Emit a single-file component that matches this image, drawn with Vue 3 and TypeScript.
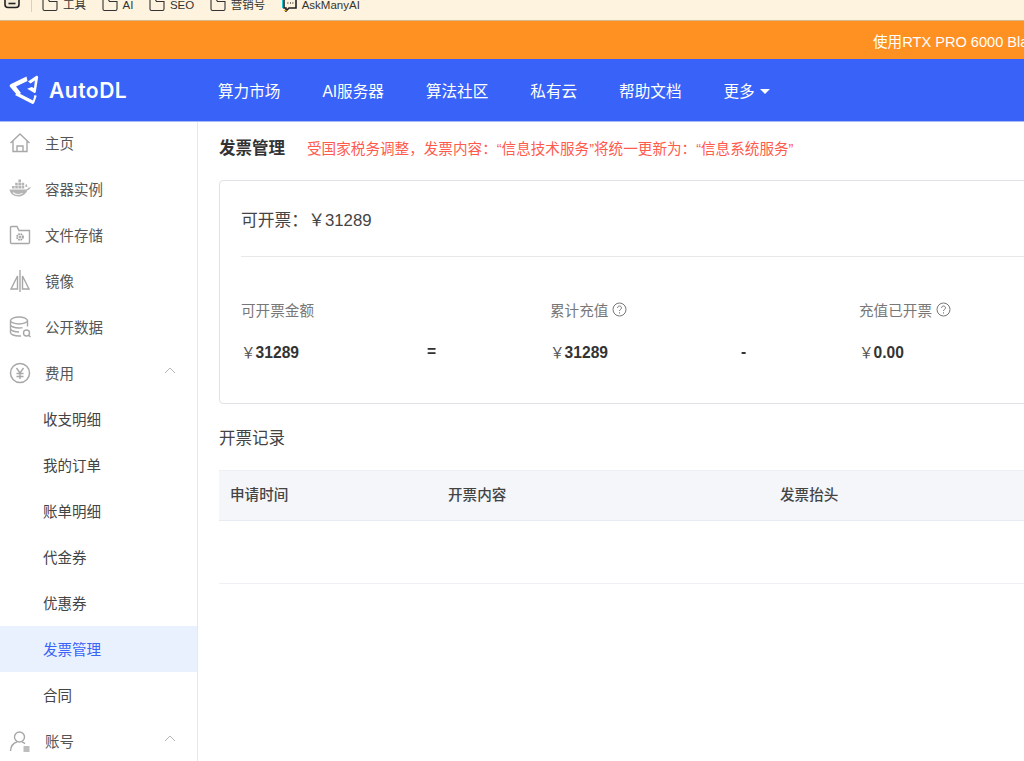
<template>
  <div class="page">
    <div class="bookmarks">
      <svg class="printer" width="16" height="12" viewBox="0 0 16 12" fill="none" stroke="#222" stroke-width="1.6">
        <rect x="1" y="-3" width="14" height="10.500" rx="3" fill="#f4ead8" />
        <path d="M4.500 3.500h7" />
      </svg>
      <span class="bm-sep"></span>
      <span v-for="b in bookmarks" :key="b" class="bm">
        <svg width="16" height="12" viewBox="0 0 16 12" fill="none" stroke="#333" stroke-width="1.100">
          <path d="M1 -2v11a1.500 1.500 0 0 0 1.500 1.500h11A1.500 1.500 0 0 0 15 9V1.500H7.500L6 -1" />
        </svg>
        <span>{{ b }}</span>
      </span>
      <span class="bm">
        <svg width="16" height="12" viewBox="0 0 16 12">
          <path d="M3 -2h12v10H8l-3 3V8H3z" fill="none" stroke="#222" stroke-width="1.600" />
          <path d="M6.500 3h.8M9 3h.8M11.500 3h.8" stroke="#222" stroke-width="1.400" />
          <path d="M1.500 0v8" stroke="#19c8d8" stroke-width="1" />
          <path d="M3 10.500h2.500" stroke="#f0a020" stroke-width="1.200" />
        </svg>
        <span>AskManyAI</span>
      </span>
    </div>

    <div class="notice">
      <span>使用RTX PRO 6000 Blackwell</span>
    </div>

    <header class="nav">
      <div class="logo">
        <svg width="32" height="32" viewBox="0 0 32 32" fill="#fff">
          <path d="M18.500 2.500 3 10c-1.500.8-1.700 2-.8 3l7.300 8.500 3.500-2.500-5-6.500 11.500-5.500z" />
          <path d="M20 7.500 28 2c1.300-.8 2.300 0 2.100 1.400L27.800 18c-.2 1-1 1.200-1.800.8l-6.800-4 4.500-1.800 2.300.9.900-7.300-4.300 3z" />
          <path d="M9.500 18.500 25 26.500l1.500-5.500 2.200.8-2.400 7c-.4 1.100-1.400 1.400-2.300.9L7 21z" />
        </svg>
        <span class="logo-text">AutoDL</span>
      </div>
      <nav class="nav-links">
        <span v-for="n in navLinks" :key="n">{{ n }}</span>
        <span class="more">更多<i class="caret"></i></span>
      </nav>
    </header>

    <div class="body">
      <aside class="sidebar">
        <div
          v-for="item in menu"
          :key="item.label"
          :class="['menu-item', { sub: !item.icon, active: item.active }]"
        >
          <span v-if="item.icon" class="menu-icon">
            <svg width="22" height="22" viewBox="0 0 22 22" fill="none" stroke="#a8a8a8" stroke-width="1.400">
              <template v-if="item.icon === 'home'">
                <path d="M1.500 11 11 2l9.500 9M4 9v10.500h14V9" />
                <path d="M8 19.500V14h6v5.500" />
              </template>
              <template v-else-if="item.icon === 'docker'">
                <path d="M.5 11.500H17c1 0 2-.8 2.500-2 1 .2 2 0 2.500-.5-1 2.500-3 3-3.500 3-1.500 4-5 6.500-9 6.500-5 0-8.500-3-9-7z" fill="#b5b5b5" stroke="none" />
                <path d="M3 8h2.600v2.600H3zM6.200 8h2.600v2.600H6.200zM9.400 8H12v2.600H9.400zM12.600 8h2.600v2.600h-2.600zM6.200 4.800h2.600v2.600H6.200zM9.400 4.800H12v2.600H9.400zM12.600 4.800h2.600v2.600h-2.600zM9.400 1.600H12v2.600H9.400z" fill="#b5b5b5" stroke="none" />
                <path d="M16.500 9c-.3-1.200 0-2.300.7-3 .8.600 1.200 1.800 1 3z" fill="#b5b5b5" stroke="none" />
                <path d="M4 14.500c2.500 2.200 6.500 2.400 9.500.6" stroke="#f4f4f4" stroke-width="1.100" />
              </template>
              <template v-else-if="item.icon === 'folder'">
                <path d="M1.500 3.500v15a1 1 0 0 0 1 1h17a1 1 0 0 0 1-1V6.500H10L8 2.500H2.500a1 1 0 0 0-1 1z" />
                <circle cx="11" cy="13" r="3" stroke="#999" stroke-dasharray="1.600 .8" stroke-width="1.600" />
                <circle cx="11" cy="13" r="1" stroke="#999" stroke-width="1" />
              </template>
              <template v-else-if="item.icon === 'mirror'">
                <path d="M11 0v22" />
                <path d="M8.500 6v13H2zM13.500 6v13h6.500z" />
              </template>
              <template v-else-if="item.icon === 'data'">
                <ellipse cx="10" cy="4.500" rx="8.500" ry="3.500" />
                <path d="M1.500 4.500v12c0 2 4 3.500 8.500 3.500h2M18.500 4.500v6M1.500 8.500c0 2 4 3.500 8.500 3.500 1.500 0 2.500 0 3.500-.3M1.500 12.500c0 2 4 3.500 8.500 3.500" />
                <circle cx="17.500" cy="17" r="3" />
                <path d="m19.500 19 2 2" />
              </template>
              <template v-else-if="item.icon === 'yen'">
                <circle cx="11" cy="11" r="9.500" stroke-width="1.500" />
                <path d="m7.500 6 3.500 5 3.500-5M7.500 11.500h7M7.500 14.500h7M11 11v6" />
              </template>
              <template v-else>
                <circle cx="10.500" cy="7" r="5" />
                <path d="M1.500 21c.3-5 3-8 6.500-9M13 12c1 .3 2 .8 3 1.600" />
                <path d="M14.500 17h6M14.500 19h6M14.500 21h6" />
              </template>
            </svg>
          </span>
          <span class="menu-label">{{ item.label }}</span>
          <svg v-if="item.arrow" class="menu-arrow" width="12" height="7" viewBox="0 0 12 7" fill="none" stroke="#b5b5b5" stroke-width="1">
            <path d="m1 6 5-5 5 5" />
          </svg>
        </div>
      </aside>

      <main class="content">
        <div class="title-row">
          <h1>发票管理</h1>
          <span class="tip">受国家税务调整，发票内容：“信息技术服务”将统一更新为：“信息系统服务”</span>
        </div>

        <section class="card">
          <div class="available">可开票：￥31289</div>
          <div class="stats">
            <div v-for="s in stats" :key="s.label" class="stat">
              <div class="stat-label">
                {{ s.label }}
                <svg v-if="s.help" width="15" height="15" viewBox="0 0 15 15" fill="none" stroke="#777" stroke-width="1">
                  <circle cx="7.500" cy="7.500" r="6.500" />
                  <path d="M5.500 6c0-1.200 1-2 2-2s2 .8 2 1.900c0 1.500-2 1.500-2 3.100" />
                  <path d="M7.500 10.300v1.200" />
                </svg>
              </div>
              <div class="stat-value">
                <span class="yen">￥</span><b>{{ s.value }}</b>
                <b v-if="s.op" class="op" :style="{ left: s.opLeft + 'px' }">{{ s.op }}</b>
              </div>
            </div>
          </div>
        </section>

        <h2>开票记录</h2>

        <div class="thead">
          <span class="col-time">申请时间</span>
          <span class="col-content">开票内容</span>
          <span>发票抬头</span>
        </div>
        <div class="tbody"></div>
      </main>
    </div>
  </div>
</template>

<script setup lang="ts">
interface MenuItem {
  label: string
  icon?: string
  arrow?: boolean
  active?: boolean
}

interface Stat {
  label: string
  value: string
  help?: boolean
  op?: string
  opLeft?: number
}

const bookmarks = ['工具', 'AI', 'SEO', '营销号']
const navLinks = ['算力市场', 'AI服务器', '算法社区', '私有云', '帮助文档']

const menu: MenuItem[] = [
  { label: '主页', icon: 'home' },
  { label: '容器实例', icon: 'docker' },
  { label: '文件存储', icon: 'folder' },
  { label: '镜像', icon: 'mirror' },
  { label: '公开数据', icon: 'data' },
  { label: '费用', icon: 'yen', arrow: true },
  { label: '收支明细' },
  { label: '我的订单' },
  { label: '账单明细' },
  { label: '代金券' },
  { label: '优惠券' },
  { label: '发票管理', active: true },
  { label: '合同' },
  { label: '账号', icon: 'user', arrow: true }
]

const stats: Stat[] = [
  { label: '可开票金额', value: '31289', op: '=', opLeft: 186 },
  { label: '累计充值', value: '31289', help: true, op: '-', opLeft: 191 },
  { label: '充值已开票', value: '0.00', help: true }
]
</script>

<style>
html,
body {
  margin: 0;
  overflow: hidden;
  background: #fff;
}
</style>

<style scoped>
.page {
  width: 1024px;
  height: 761px;
  overflow: hidden;
  font-family: "Liberation Sans", "Noto Sans CJK SC", sans-serif;
  color: #333;
}

.bookmarks {
  display: flex;
  align-items: flex-start;
  height: 20px;
  padding-left: 4px;
  background: #fef3de;
  border-bottom: 1px solid #d8b98c;
  font-size: 11.5px;
  color: #333;
  overflow: hidden;
}

.bm-sep {
  width: 1px;
  height: 12px;
  margin: 0 10px 0 11px;
  background: #d8d0c0;
}

.bm {
  display: flex;
  align-items: flex-start;
  gap: 5px;
  margin-right: 15.5px;
  line-height: 11px;
}

.notice {
  display: flex;
  align-items: center;
  height: 38px;
  background: #ff9123;
  color: #fff;
  font-size: 14.6px;
  white-space: nowrap;
  padding-left: 873px;
  overflow: hidden;
}

.nav {
  position: relative;
  z-index: 1;
  display: flex;
  align-items: center;
  height: 62px;
  background: #3963f8;
  color: #fff;
  border-bottom: 1px solid #a5bcf8;
}

.logo {
  display: flex;
  align-items: center;
  gap: 9px;
  width: 218px;
  padding-left: 8px;
  box-sizing: border-box;
}

.logo-text {
  font-family: "Inter", "Liberation Sans", sans-serif;
  font-size: 21px;
  font-weight: 600;
  letter-spacing: 0.5px;
}

.nav-links {
  display: flex;
  gap: 42px;
  font-size: 15.6px;
}

.more {
  display: flex;
  align-items: center;
}

.caret {
  width: 0;
  height: 0;
  margin-left: 5px;
  margin-top: 2px;
  border-left: 5px solid transparent;
  border-right: 5px solid transparent;
  border-top: 5px solid #fff;
}

.body {
  display: flex;
}

.sidebar {
  width: 198px;
  height: 641px;
  margin-top: -2px;
  flex: none;
  box-sizing: border-box;
  border-right: 1px solid #e8e8ea;
  overflow: hidden;
}

.menu-item {
  position: relative;
  display: flex;
  align-items: center;
  height: 46px;
  font-size: 14.5px;
  color: #555;
}

.menu-label {
  padding-bottom: 2px;
}

.menu-item.sub {
  padding-left: 43px;
  color: #444;
}

.menu-item.active {
  background: #e9f1fe;
  color: #3963f8;
}

.menu-icon {
  display: flex;
  width: 45px;
  padding-left: 9px;
  box-sizing: border-box;
}

.menu-arrow {
  position: absolute;
  right: 21px;
  top: 17px;
}

.content {
  flex: 1;
  min-width: 0;
  padding-left: 21px;
  margin-right: -30px;
}

.title-row {
  display: flex;
  align-items: center;
  height: 58px;
  padding-bottom: 8px;
  box-sizing: border-box;
}

h1 {
  margin: 0;
  font-size: 16.500px;
  font-weight: 700;
  color: #333;
}

.tip {
  margin-left: 22px;
  font-size: 14.6px;
  color: #ff5b4d;
  white-space: nowrap;
}

.card {
  height: 224px;
  padding: 0 21px;
  box-sizing: border-box;
  border: 1px solid #e0e2e8;
  border-radius: 4px;
}

.available {
  height: 75px;
  line-height: 79px;
  font-size: 16.800px;
  color: #444;
  border-bottom: 1px solid #e8e8ea;
}

.stats {
  display: flex;
  padding-top: 43px;
}

.stat {
  flex: none;
  width: 309px;
}

.stat-label {
  display: flex;
  align-items: center;
  gap: 4px;
  height: 18px;
  font-size: 14.6px;
  color: #777;
}

.stat-value {
  position: relative;
  margin-top: 23px;
  font-size: 15.600px;
  color: #333;
}

.yen {
  font-size: 14.6px;
  color: #555;
}

.op {
  position: absolute;
  top: 2px;
}

h2 {
  margin: 0;
  padding-top: 24px;
  height: 42px;
  line-height: 20px;
  font-size: 16.500px;
  font-weight: 400;
  color: #444;
}

.thead {
  display: flex;
  align-items: center;
  height: 51px;
  box-sizing: border-box;
  padding: 0 0 4px 11px;
  background: #f4f6fa;
  border-top: 1px solid #eef0f6;
  border-bottom: 1px solid #e8ebf4;
  font-size: 14.6px;
  font-weight: 500;
  color: #444;
}

.col-time {
  width: 218px;
}

.col-content {
  width: 332px;
}

.tbody {
  height: 62px;
  border-bottom: 1px solid #eff0f4;
}
</style>
